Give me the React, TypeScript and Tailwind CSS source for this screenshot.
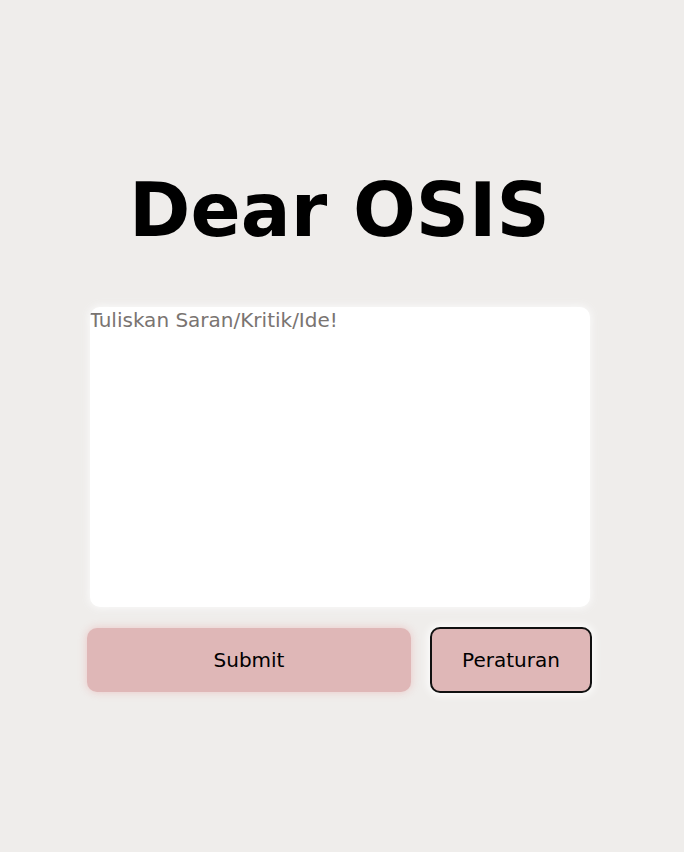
import React from "react";

export default function App() {
  return (
    <div className="min-h-screen w-full bg-[#efedeb] flex flex-col items-center font-['DejaVu_Sans',sans-serif]">
      <div className="mr-[5px] flex flex-col items-center">
        <h1 className="mt-[166px] text-[74px] leading-[88px] font-bold text-black">
          Dear OSIS
        </h1>
        <div className="mt-[53px] w-[505px] flex flex-col">
          <textarea
            placeholder="Tuliskan Saran/Kritik/Ide!"
            className="mx-auto w-[500px] h-[300px] bg-white rounded-[10px] resize-none outline-none p-0 text-[20px] leading-[26px] text-black placeholder:text-[#7a7471] shadow-[0_0_8px_2px_rgba(255,255,255,0.9),0_0_12px_rgba(0,0,0,0.06)]"
          />
          <div className="mt-[20px] flex items-center gap-[19px]">
            <button className="w-[324px] h-16 rounded-[10px] bg-[#dfb7b7] text-[20px] text-black shadow-[0_0_8px_rgba(230,150,150,0.45)]">
              Submit
            </button>
            <button className="w-[162px] h-[66px] rounded-[10px] bg-[#dfb7b7] border-2 border-[#111] text-[20px] text-black shadow-[0_0_8px_2px_rgba(255,255,255,0.9)]">
              Peraturan
            </button>
          </div>
        </div>
      </div>
    </div>
  );
}
